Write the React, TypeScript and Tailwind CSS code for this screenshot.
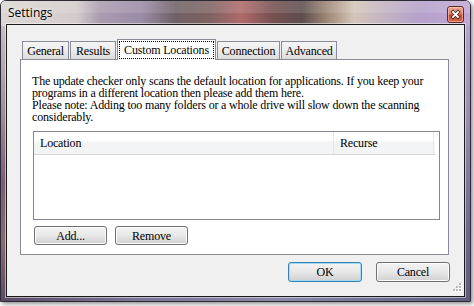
import React from "react";

const btnBase =
  "flex items-center justify-center rounded-[3px] border text-[12px] leading-none text-black shadow-[inset_0_0_0_1px_#fcfcfc] bg-linear-to-b from-[#f3f3f3] via-[#e8e8e8] to-[#d0d0d0]";

function Tab({ label, w, selected }: { label: string; w: string; selected?: boolean }) {
  if (selected) {
    return (
      <div
        className={`relative z-10 -mb-px flex h-[21px] items-start justify-center border border-b-0 border-[#898c95] bg-white pt-[1px] ${w}`}
      >
        <div className="flex h-[18px] w-[95px] items-center justify-center border border-dotted border-black leading-none">
          {label}
        </div>
      </div>
    );
  }
  return (
    <div
      className={`flex h-[18px] items-center justify-center border border-b-0 border-[#898c95] bg-linear-to-b from-[#f5f5f5] via-[#ececec] to-[#dcdcdc] pt-[1px] leading-none ${w}`}
    >
      {label}
    </div>
  );
}

function Glass() {
  return (
    <svg className="absolute left-0 top-0" width="471" height="302" viewBox="0 0 471 302">
      <defs>
        <linearGradient id="gtop" x1="0" y1="0" x2="1" y2="0">
          <stop offset="0" stopColor="#dcd7d5" />
          <stop offset="0.16" stopColor="#d3cccb" />
          <stop offset="0.21" stopColor="#aa9cb0" />
          <stop offset="0.30" stopColor="#9a8ba6" />
          <stop offset="0.37" stopColor="#6f6166" />
          <stop offset="0.44" stopColor="#7d6262" />
          <stop offset="0.51" stopColor="#b06a6a" />
          <stop offset="0.58" stopColor="#744f50" />
          <stop offset="0.64" stopColor="#5e4e4e" />
          <stop offset="0.69" stopColor="#9c8574" />
          <stop offset="0.75" stopColor="#d4c6b8" />
          <stop offset="0.81" stopColor="#c4b4c2" />
          <stop offset="0.89" stopColor="#b5a1cb" />
          <stop offset="1" stopColor="#c0a8d5" />
        </linearGradient>
        <linearGradient id="gleft" x1="0" y1="0" x2="0" y2="1">
          <stop offset="0" stopColor="#d4cccc" />
          <stop offset="0.35" stopColor="#a2909e" />
          <stop offset="0.6" stopColor="#7a5e78" />
          <stop offset="0.8" stopColor="#8a6a70" />
          <stop offset="1" stopColor="#5a4a66" />
        </linearGradient>
        <linearGradient id="gright" x1="0" y1="0" x2="0" y2="1">
          <stop offset="0" stopColor="#c0a8d5" />
          <stop offset="0.4" stopColor="#9a8ab0" />
          <stop offset="0.75" stopColor="#6e6890" />
          <stop offset="1" stopColor="#5c5a7c" />
        </linearGradient>
        <linearGradient id="gbot" x1="0" y1="0" x2="1" y2="0">
          <stop offset="0" stopColor="#5a4a66" />
          <stop offset="0.3" stopColor="#7c7698" />
          <stop offset="0.6" stopColor="#8a88a8" />
          <stop offset="1" stopColor="#5c5a7c" />
        </linearGradient>
      </defs>
      <rect x="0" y="0" width="471" height="302" fill="url(#gbot)" />
      <rect x="0" y="0" width="8" height="302" fill="url(#gleft)" />
      <rect x="463" y="0" width="8" height="302" fill="url(#gright)" />
      <rect x="0" y="0" width="471" height="25" fill="url(#gtop)" />
      <rect x="0" y="0" width="471" height="12" fill="#ffffff" opacity="0.12" />
    </svg>
  );
}

function CloseButton() {
  return (
    <svg width="17" height="17" viewBox="0 0 17 17">
      <defs>
        <linearGradient id="cb" x1="0" y1="0" x2="0" y2="1">
          <stop offset="0" stopColor="#eeae9c" />
          <stop offset="0.45" stopColor="#df7b62" />
          <stop offset="0.55" stopColor="#c8442b" />
          <stop offset="1" stopColor="#dc6a4e" />
        </linearGradient>
      </defs>
      <rect x="0.5" y="0.5" width="16" height="16" rx="2.5" fill="url(#cb)" stroke="#5e2b24" />
      <rect x="1.5" y="1.5" width="14" height="14" rx="1.5" fill="none" stroke="#f6c8bc" strokeOpacity="0.6" />
      <path d="M6 6 L11 11 M11 6 L6 11" stroke="#4a2a26" strokeWidth="3.4" strokeLinecap="square" />
      <path d="M6 6 L11 11 M11 6 L6 11" stroke="#ffffff" strokeWidth="1.8" strokeLinecap="square" />
    </svg>
  );
}

export default function App() {
  return (
    <div className="relative h-[306px] w-[474px] overflow-hidden bg-white">
      <div className="relative flex h-[302px] w-[471px] flex-col overflow-hidden rounded-t-[6px] border border-[#2e2a33] px-[5px] pb-[4px] shadow-[2px_2px_4px_#00000070]">
        <Glass />
        {/* title bar */}
        <div className="relative flex h-[23px] items-start justify-between">
          <div className="ml-[2px] mt-[4px] font-[Open_Sans] text-[12px] leading-[16px] text-black [text-shadow:0_0_5px_#ffffff]">
            Settings
          </div>
          <div className="mr-[1px] mt-[5px] flex">
            <CloseButton />
          </div>
        </div>

        {/* client area */}
        <div className="relative flex flex-1 flex-col border border-[#1a1a1a] bg-[#f0f0f0] pl-[13px] pt-[14px] font-[Liberation_Serif] text-[12px] tracking-[-0.18px] text-black outline outline-1 outline-[#ffffff80]">
          {/* tabs */}
          <div className="flex h-[20px] items-end pl-[2px]">
            <Tab label="General" w="w-[47px]" />
            <div className="w-[1px]" />
            <Tab label="Results" w="w-[46px]" />
            <div className="w-[1px]" />
            <Tab label="Custom Locations" w="w-[99px]" selected />
            <div className="w-[1px]" />
            <Tab label="Connection" w="w-[63px]" />
            <div className="w-[1px]" />
            <Tab label="Advanced" w="w-[56px]" />
          </div>

          {/* panel */}
          <div className="flex h-[196px] w-[429px] flex-col border border-[#898c95] bg-white pl-[11px] pt-[15px]">
            <div className="leading-[12px] whitespace-nowrap">
              <div>The update checker only scans the default location for applications. If you keep your</div>
              <div>programs in a different location then please add them here.</div>
              <div>Please note: Adding too many folders or a whole drive will slow down the scanning</div>
              <div>considerably.</div>
            </div>

            <div className="ml-[1px] mt-[8px] flex h-[89px] w-[407px] flex-col border border-[#828790] bg-white">
              <div className="flex h-[23px] w-[401px] border-b border-[#d5d5d5] bg-linear-to-b from-white from-40% to-[#f3f4f6] to-45%">
                <div className="flex w-[300px] items-center border-r border-[#e3e6ea] pl-[6px] leading-none">Location</div>
                <div className="flex w-[100px] items-center border-r border-[#e3e6ea] pl-[6px] leading-none">Recurse</div>
              </div>
            </div>

            <div className="ml-[2px] mt-[6px] flex gap-[8px]">
              <div className={`${btnBase} h-[19px] w-[73px] border-[#707070]`}>Add...</div>
              <div className={`${btnBase} h-[19px] w-[73px] border-[#707070]`}>Remove</div>
            </div>
          </div>

          {/* bottom buttons */}
          <div className="mr-[14px] mt-[7px] flex justify-end gap-[14px]">
            <div className="flex h-[20px] w-[74px] items-center justify-center rounded-[3px] border border-[#3c7fb1] bg-linear-to-b from-[#f3f3f3] via-[#e8e8e8] to-[#d0d0d0] text-[12px] leading-none text-black shadow-[inset_0_0_0_1px_#9fdcf5]">
              OK
            </div>
            <div className={`${btnBase} h-[20px] w-[74px] border-[#707070]`}>Cancel</div>
          </div>

          {/* size grip */}
          <svg className="absolute bottom-[2px] right-[2px]" width="11" height="11" viewBox="0 0 11 11">
            {[
              [8, 0],
              [8, 3],
              [5, 3],
              [8, 6],
              [5, 6],
              [2, 6],
            ].map(([x, y], i) => (
              <g key={i}>
                <rect x={x + 1} y={y + 1} width="2" height="2" fill="#ffffff" />
                <rect x={x} y={y} width="2" height="2" fill="#b8b8b8" />
              </g>
            ))}
          </svg>
        </div>
      </div>
    </div>
  );
}
